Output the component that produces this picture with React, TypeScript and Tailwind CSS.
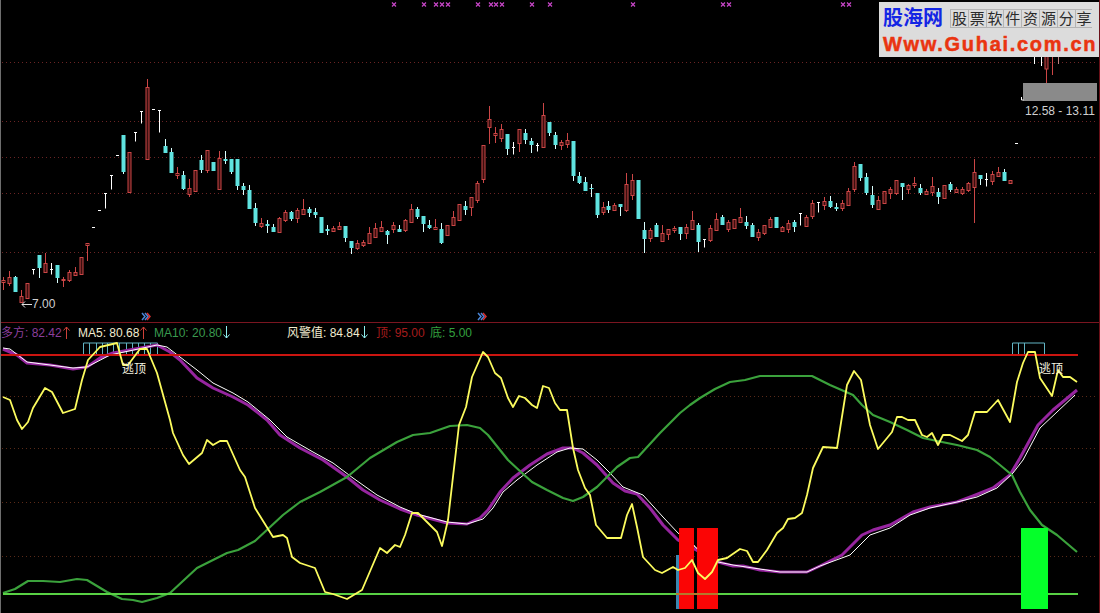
type Candle = ['r' | 'c' | 'w', number, number, number, number];

// kind, high, body top, body bottom, low
const CANDLES: Candle[] = [
  ['r', 277, 280, 282, 290], ['r', 271, 277, 283, 286], ['c', 276, 277, 292, 292], ['r', 290, 296, 302, 303],
  ['r', 283, 283, 298, 298], ['w', 269, 269, 269, 274], ['c', 255, 255, 268, 278], ['r', 253, 263, 272, 272],
  ['w', 263, 269, 269, 274], ['c', 265, 265, 278, 283], ['r', 277, 279, 280, 287], ['r', 270, 272, 280, 282],
  ['r', 267, 272, 275, 276], ['r', 257, 257, 274, 274], ['r', 243, 243, 245, 261], ['w', 227, 227, 227, 227],
  ['w', 210, 210, 210, 210], ['w', 193, 193, 208, 208], ['w', 175, 175, 189, 189], ['w', 155, 155, 155, 155],
  ['c', 135, 135, 172, 174], ['r', 152, 152, 192, 192], ['w', 132, 132, 132, 141], ['w', 111, 111, 111, 123],
  ['r', 79, 87, 159, 159], ['w', 109, 109, 109, 109], ['w', 110, 110, 132, 132], ['c', 139, 146, 153, 153],
  ['c', 148, 152, 173, 173], ['r', 167, 173, 175, 179], ['c', 171, 175, 189, 190], ['r', 179, 188, 194, 197],
  ['r', 170, 170, 191, 191], ['c', 155, 160, 170, 173], ['r', 150, 150, 170, 173], ['c', 162, 162, 171, 171],
  ['r', 151, 158, 189, 189], ['c', 151, 159, 161, 164], ['c', 159, 159, 172, 174], ['c', 159, 159, 186, 190],
  ['c', 183, 186, 190, 195], ['c', 185, 190, 209, 209], ['c', 203, 208, 223, 226], ['r', 218, 223, 226, 228],
  ['c', 220, 224, 226, 233], ['c', 224, 227, 232, 232], ['r', 217, 218, 232, 232], ['r', 210, 212, 220, 222],
  ['c', 211, 212, 219, 221], ['r', 208, 210, 218, 223], ['r', 199, 209, 214, 215], ['c', 207, 209, 213, 217],
  ['c', 208, 212, 215, 218], ['c', 217, 217, 233, 233], ['c', 225, 229, 231, 235], ['r', 226, 228, 231, 232],
  ['r', 222, 226, 229, 230], ['c', 226, 226, 238, 242], ['c', 241, 241, 248, 254], ['r', 240, 243, 248, 250],
  ['r', 240, 242, 245, 247], ['r', 227, 233, 243, 244], ['r', 223, 228, 237, 238], ['r', 221, 227, 231, 231],
  ['c', 230, 231, 235, 244], ['r', 222, 225, 229, 233], ['c', 225, 229, 232, 232], ['r', 219, 220, 230, 232],
  ['r', 204, 209, 222, 223], ['c', 207, 209, 217, 219], ['c', 216, 216, 224, 232], ['c', 220, 225, 228, 229],
  ['r', 219, 227, 229, 230], ['c', 223, 229, 243, 244], ['r', 225, 225, 235, 235], ['r', 211, 217, 225, 225],
  ['r', 204, 204, 220, 220], ['c', 201, 206, 210, 215], ['r', 197, 197, 207, 216], ['r', 181, 183, 200, 203],
  ['r', 145, 145, 179, 183], ['r', 106, 119, 127, 144], ['r', 127, 133, 135, 143], ['r', 124, 129, 138, 142],
  ['c', 134, 134, 149, 155], ['w', 142, 147, 147, 154], ['r', 129, 129, 143, 152], ['c', 129, 133, 140, 144],
  ['c', 138, 141, 145, 153], ['w', 143, 145, 145, 151], ['r', 103, 115, 147, 147], ['c', 122, 122, 133, 136],
  ['c', 132, 135, 145, 149], ['r', 140, 142, 145, 150], ['r', 133, 140, 144, 148], ['c', 141, 141, 176, 181],
  ['c', 172, 176, 183, 184], ['c', 177, 182, 191, 191], ['c', 184, 188, 189, 197], ['c', 193, 193, 215, 218],
  ['r', 202, 207, 212, 215], ['c', 201, 206, 210, 213], ['r', 203, 205, 210, 210], ['c', 204, 204, 207, 216],
  ['r', 173, 184, 210, 212], ['r', 174, 180, 195, 200], ['c', 180, 180, 219, 219], ['c', 222, 230, 239, 253],
  ['r', 228, 230, 238, 242], ['c', 223, 225, 237, 237], ['r', 225, 233, 241, 241], ['r', 229, 229, 234, 240],
  ['r', 226, 228, 230, 233], ['c', 227, 227, 234, 240], ['r', 224, 227, 233, 239], ['r', 211, 220, 229, 229],
  ['c', 223, 225, 242, 252], ['w', 239, 239, 239, 247], ['r', 225, 228, 240, 242], ['r', 213, 219, 230, 230],
  ['c', 215, 217, 225, 225], ['r', 220, 222, 229, 232], ['r', 219, 219, 228, 228], ['r', 208, 217, 222, 222],
  ['c', 216, 222, 226, 229], ['c', 223, 225, 237, 237], ['r', 229, 232, 237, 241], ['r', 225, 225, 233, 235],
  ['r', 217, 219, 227, 227], ['c', 217, 217, 228, 228], ['r', 226, 227, 231, 232], ['r', 220, 223, 229, 233],
  ['c', 220, 222, 227, 232], ['w', 213, 213, 213, 225], ['r', 215, 217, 226, 226], ['r', 200, 203, 216, 219],
  ['w', 202, 202, 202, 212], ['r', 197, 201, 205, 210], ['c', 196, 201, 207, 208], ['c', 203, 207, 209, 211],
  ['r', 200, 203, 208, 211], ['r', 188, 191, 205, 205], ['r', 162, 166, 189, 192], ['c', 164, 164, 178, 181],
  ['c', 173, 177, 193, 195], ['c', 186, 195, 205, 208], ['r', 196, 200, 209, 209], ['r', 191, 191, 203, 203],
  ['r', 187, 189, 193, 199], ['r', 180, 180, 193, 195], ['c', 183, 183, 187, 200], ['r', 184, 185, 189, 194],
  ['r', 177, 183, 185, 188], ['c', 184, 188, 193, 195], ['r', 189, 191, 194, 194], ['r', 177, 186, 192, 196],
  ['c', 188, 192, 197, 204], ['r', 185, 185, 198, 198], ['c', 182, 184, 190, 192], ['r', 187, 189, 192, 192],
  ['r', 187, 189, 193, 195], ['r', 182, 183, 190, 192], ['r', 159, 172, 187, 223], ['c', 175, 175, 179, 185],
  ['w', 173, 179, 179, 186], ['r', 171, 174, 181, 185], ['r', 167, 172, 176, 177], ['c', 169, 172, 181, 181],
  ['r', 180, 180, 183, 183], ['w', 143, 143, 143, 143],
];

const TOP_CROSSES = [394, 424, 436, 442, 448, 478, 491, 496, 502, 532, 550, 633, 723, 729, 843, 849];
const TOP_GRID = [62, 121, 157, 193, 252];
const BOTTOM_GRID = [396, 448, 502, 556];
const TOP_BOX_X = [83, 89, 96, 102, 107, 113, 119, 126, 132, 138, 144, 150, 157];
const RIGHT_BOX_X = [1012, 1018, 1024, 1044];

const YELLOW =
  '3,397 10,400 17,420 22,429 28,422 33,408 45,388 52,392 63,413 75,409 82,380 88,360 100,347 117,343 123,365 128,365 140,349 147,349 157,373 170,420 173,433 183,455 189,464 202,453 207,440 213,445 220,441 227,441 240,470 245,477 255,508 273,537 283,535 287,538 292,557 300,563 315,568 325,592 333,594 347,599 362,590 380,548 387,553 395,545 400,547 405,535 412,513 418,513 433,528 437,532 442,546 448,520 459,425 466,407 472,377 483,352 488,357 495,373 501,378 508,398 513,407 519,396 525,398 532,405 537,408 543,386 549,388 555,403 560,410 567,410 573,448 578,470 585,488 590,495 596,525 607,538 621,538 627,515 632,504 637,527 643,557 655,570 662,573 673,567 678,570 685,568 692,560 698,573 705,579 712,572 718,560 727,558 740,549 747,551 753,562 758,562 767,550 777,533 783,528 788,519 795,518 802,513 807,495 813,468 823,447 837,448 847,385 854,371 861,380 870,425 878,449 892,432 897,417 902,417 908,420 915,420 922,435 927,437 932,433 938,445 943,435 950,435 962,441 968,435 975,412 987,412 998,400 1010,422 1017,382 1023,363 1028,352 1035,352 1040,378 1052,396 1058,370 1063,377 1070,377 1077,382';
const GREEN =
  '3,593 15,589 28,581 43,581 60,582 77,579 87,580 107,592 122,599 133,600 142,602 157,598 170,593 197,568 227,553 238,550 255,541 283,515 300,502 320,492 347,477 370,458 397,442 413,435 430,433 450,426 467,425 480,428 488,435 508,460 522,473 532,482 547,490 563,498 573,501 583,497 597,487 617,467 630,458 638,457 660,433 680,413 690,405 700,398 715,389 730,382 745,380 760,376 790,376 812,376 830,385 853,395 862,405 873,415 890,422 907,430 923,438 937,441 957,445 977,450 990,457 1000,465 1012,475 1020,492 1030,510 1042,525 1057,535 1077,552';
const PURPLE =
  '3,349 17,355 27,363 50,365 73,369 87,367 100,358 113,353 157,345 170,352 180,360 197,378 213,388 233,397 248,405 267,420 280,435 300,448 323,460 347,477 363,490 380,500 400,509 417,515 447,523 467,524 480,518 488,510 500,492 513,478 530,465 547,454 563,448 573,448 583,453 597,465 613,483 625,491 637,494 650,508 663,525 678,540 718,562 733,566 743,566 760,570 780,572 807,572 820,566 842,555 862,535 873,530 890,525 913,512 930,507 957,502 973,496 993,488 1010,475 1020,458 1038,425 1053,410 1077,390';
const WHITE =
  '3,348 10,349 27,362 50,365 73,368 87,367 110,355 157,345 167,347 180,357 197,370 213,383 233,393 248,402 270,420 287,437 313,452 333,463 353,478 377,495 400,507 417,514 447,522 467,524 483,519 493,508 503,492 517,480 537,465 557,452 570,448 583,449 597,460 610,473 623,487 643,495 663,517 678,533 695,547 718,562 733,565 753,568 780,572 807,572 820,566 850,555 870,535 890,528 910,515 930,508 957,502 977,497 997,488 1013,473 1023,460 1040,428 1057,412 1075,395';

function CandleMark({ candle, index }: { candle: Candle; index: number }) {
  const [kind, high, top, bottom, low] = candle;
  const x = Math.round(3.3 + 5.992 * index) + 0.5;
  if (kind === 'w') {
    return (
      <g stroke="#ffffff" strokeWidth={1}>
        <line x1={x} x2={x} y1={high} y2={low + 0.5} />
        <line x1={x - 1.5} x2={x + 1.5} y1={top + 0.5} y2={top + 0.5} />
      </g>
    );
  }
  if (kind === 'c') {
    return (
      <g>
        <line x1={x} x2={x} y1={high} y2={low} stroke="#d9ffff" strokeWidth={1} />
        <rect x={x - 2} y={top} width={4} height={bottom - top} fill="#5fe3e0" />
      </g>
    );
  }
  return (
    <g stroke="#cc4646" strokeWidth={1}>
      <line x1={x} x2={x} y1={high} y2={top} />
      <line x1={x} x2={x} y1={bottom} y2={low} />
      <rect x={x - 1.5} y={top + 0.5} width={3} height={Math.max(bottom - top, 1)} fill="#3a0e0e" />
    </g>
  );
}

function Markers({ x }: { x: number }) {
  return (
    <g fill="none" strokeWidth={1.5}>
      <path d={`M${x} 313l3 3.5-3 3.5M${x + 3} 313l3 3.5-3 3.5`} stroke="#4a86d8" />
      <path d={`M${x + 5} 313l3 3.5-3 3.5`} stroke="#d83030" />
    </g>
  );
}

function PriceChart() {
  return (
    <svg viewBox="1 0 1098 322" className="block h-[322px] w-[1098px] blur-[0.3px]">
      {TOP_GRID.map((y) => (
        <line key={y} x1={2} x2={1098} y1={y + 0.5} y2={y + 0.5} stroke="#6a2424" strokeDasharray="1 3" />
      ))}
      {TOP_CROSSES.map((x) => (
        <path key={x} d={`M${x - 2} 2.5l4 4m0-4l-4 4`} stroke="#c846c8" strokeWidth={1.2} fill="none" />
      ))}
      {CANDLES.map((candle, i) => (
        <CandleMark key={i} candle={candle} index={i} />
      ))}
      <g stroke="#ffffff" strokeWidth={1}>
        <line x1={1034.5} x2={1034.5} y1={56} y2={64} />
        <line x1={1041.5} x2={1041.5} y1={56} y2={66} />
        <line x1={1058.5} x2={1058.5} y1={56} y2={64} stroke="#bd8080" />
      </g>
      <g stroke="#cc4646" strokeWidth={1}>
        <line x1={1046.5} x2={1046.5} y1={69} y2={87} />
        <rect x={1045} y={56} width={3} height={13} fill="#3a0e0e" />
        <line x1={1052.5} x2={1052.5} y1={56} y2={75} />
      </g>
      <rect x={1023} y={83} width={74} height={18} fill="#8a8a8a" />
      <path d="M1021.5 97v3h2" stroke="#ffffff" fill="none" />
      <Markers x={142} />
      <Markers x={478} />
    </svg>
  );
}

function IndicatorChart() {
  return (
    <svg viewBox="1 342 1098 271" className="block h-[271px] w-[1098px] blur-[0.3px]">
      {BOTTOM_GRID.map((y) => (
        <line key={y} x1={2} x2={1098} y1={y + 0.5} y2={y + 0.5} stroke="#5a2a18" strokeDasharray="1 3" />
      ))}
      <g stroke="#62b4c4" strokeWidth={1} fill="none">
        <path d="M83.5 343H157.5M1012.5 343H1044.5" />
        {[...TOP_BOX_X, ...RIGHT_BOX_X].map((x) => (
          <line key={x} x1={x + 0.5} x2={x + 0.5} y1={343} y2={355} />
        ))}
      </g>
      <polyline points={PURPLE} fill="none" stroke="#96259f" strokeWidth={3} strokeLinejoin="round" />
      <polyline points={WHITE} fill="none" stroke="#ffffff" strokeWidth={1} strokeLinejoin="round" />
      <polyline points={GREEN} fill="none" stroke="#3ba23c" strokeWidth={2.2} strokeLinejoin="round" />
      <line x1={1} x2={1078} y1={355} y2={355} stroke="#cb1510" strokeWidth={2} />
      <line x1={3} x2={1078} y1={594} y2={594} stroke="#58d044" strokeWidth={2} />
      <rect x={676} y={555} width={3} height={54} fill="#3a86b0" />
      <rect x={679} y={528} width={15} height={81} fill="#fb0505" />
      <rect x={697} y={528} width={21} height={81} fill="#fb0505" />
      <rect x={676} y={593} width={42} height={2} fill="#b27a2c" />
      <path d="M694 545l3 4" stroke="#f0c0c0" strokeWidth={1} />
      <rect x={1021} y={528} width={27} height={81} fill="#05ff2a" />
      <polyline points={YELLOW} fill="none" stroke="#fbfb5e" strokeWidth={1.8} strokeLinejoin="round" />
    </svg>
  );
}

function Arrow({ dir }: { dir: 'up' | 'down' }) {
  return (
    <svg viewBox="0 0 7 13" className={dir === 'up' ? 'ml-[1px] h-[13px] w-[7px] text-[#d04038]' : 'ml-[1px] h-[13px] w-[7px] text-[#8ff0f0]'}>
      <path d={dir === 'up' ? 'M3.5 13V1M.5 4.5l3-3.5 3 3.5' : 'M3.5 0v12M.5 8.5l3 3.5 3-3.5'} stroke="currentColor" fill="none" />
    </svg>
  );
}

function Legend() {
  return (
    <div className="flex h-[19px] items-center whitespace-nowrap text-[12px] leading-none">
      <span className="flex w-[77px] items-center text-[#8b3f9b]">多方:&nbsp;82.42<Arrow dir="up" /></span>
      <span className="flex w-[76px] items-center text-[#f2ecd0]">MA5:&nbsp;80.68<Arrow dir="up" /></span>
      <span className="flex w-[133px] items-center text-[#3a9a4f]">MA10:&nbsp;20.80<Arrow dir="down" /></span>
      <span className="flex w-[89px] items-center text-[#f2ecd0]">风警值:&nbsp;84.84<Arrow dir="down" /></span>
      <span className="w-[54px] text-[#a51c1c]">顶: 95.00</span>
      <span className="text-[#33a03f]">底: 5.00</span>
    </div>
  );
}

function SiteBadge() {
  const tagline = ['股', '票', '软', '件', '资', '源', '分', '享'];
  return (
    <div className="absolute right-0 top-[2px] flex h-[55px] w-[220px] flex-col bg-[#dcdcdc] pl-[4px] pt-[4px]">
      <div className="flex h-[24px] items-center">
        <span className="w-[67px] text-[20px] font-bold leading-none text-[#1426e4]">股海网</span>
        <div className="flex border-y border-[#b4b4b4]">
          {tagline.map((c) => (
            <span
              key={c}
              className="flex h-[17px] w-[17.8px] items-center justify-center border-l border-[#b4b4b4] text-[15px] leading-none text-[#2a2a2a]"
            >
              {c}
            </span>
          ))}
        </div>
      </div>
      <div className="mt-[2px] text-[20px] font-bold leading-[24px] tracking-[1.7px] text-[#ea3410] [-webkit-text-stroke:0.5px_#ea3410]">
        Www.Guhai.com.cn
      </div>
    </div>
  );
}

export default function App() {
  return (
    <div className="h-[613px] w-[1100px] overflow-hidden border-x border-l-[#6e6e6e] border-r-[#6a1018] bg-black font-['Liberation_Sans','Noto_Sans_CJK_SC',sans-serif]">
      <div className="relative h-[322px]">
        <PriceChart />
        <SiteBadge />
        <span className="absolute left-[1024px] top-[104px] text-[12px] leading-[14px] text-[#d0d0d0]">12.58 - 13.11</span>
        <span className="absolute left-[20px] top-[297px] flex items-center text-[12px] leading-[14px] text-[#d0d0d0]">
          <svg viewBox="0 0 11 7" className="h-[7px] w-[11px]">
            <path d="M11 3.5H1M4 .5l-3 3 3 3" stroke="#e0e0e0" fill="none" />
          </svg>
          7.00
        </span>
      </div>
      <div className="h-px bg-[#7a1520]" />
      <div className="relative">
        <Legend />
        <IndicatorChart />
        <span className="absolute left-[121px] top-[39px] text-[12px] leading-[14px] text-[#f4f4e0]">逃顶</span>
        <span className="absolute left-[1038px] top-[39px] text-[12px] leading-[14px] text-[#f4f4e0]">逃顶</span>
      </div>
    </div>
  );
}
